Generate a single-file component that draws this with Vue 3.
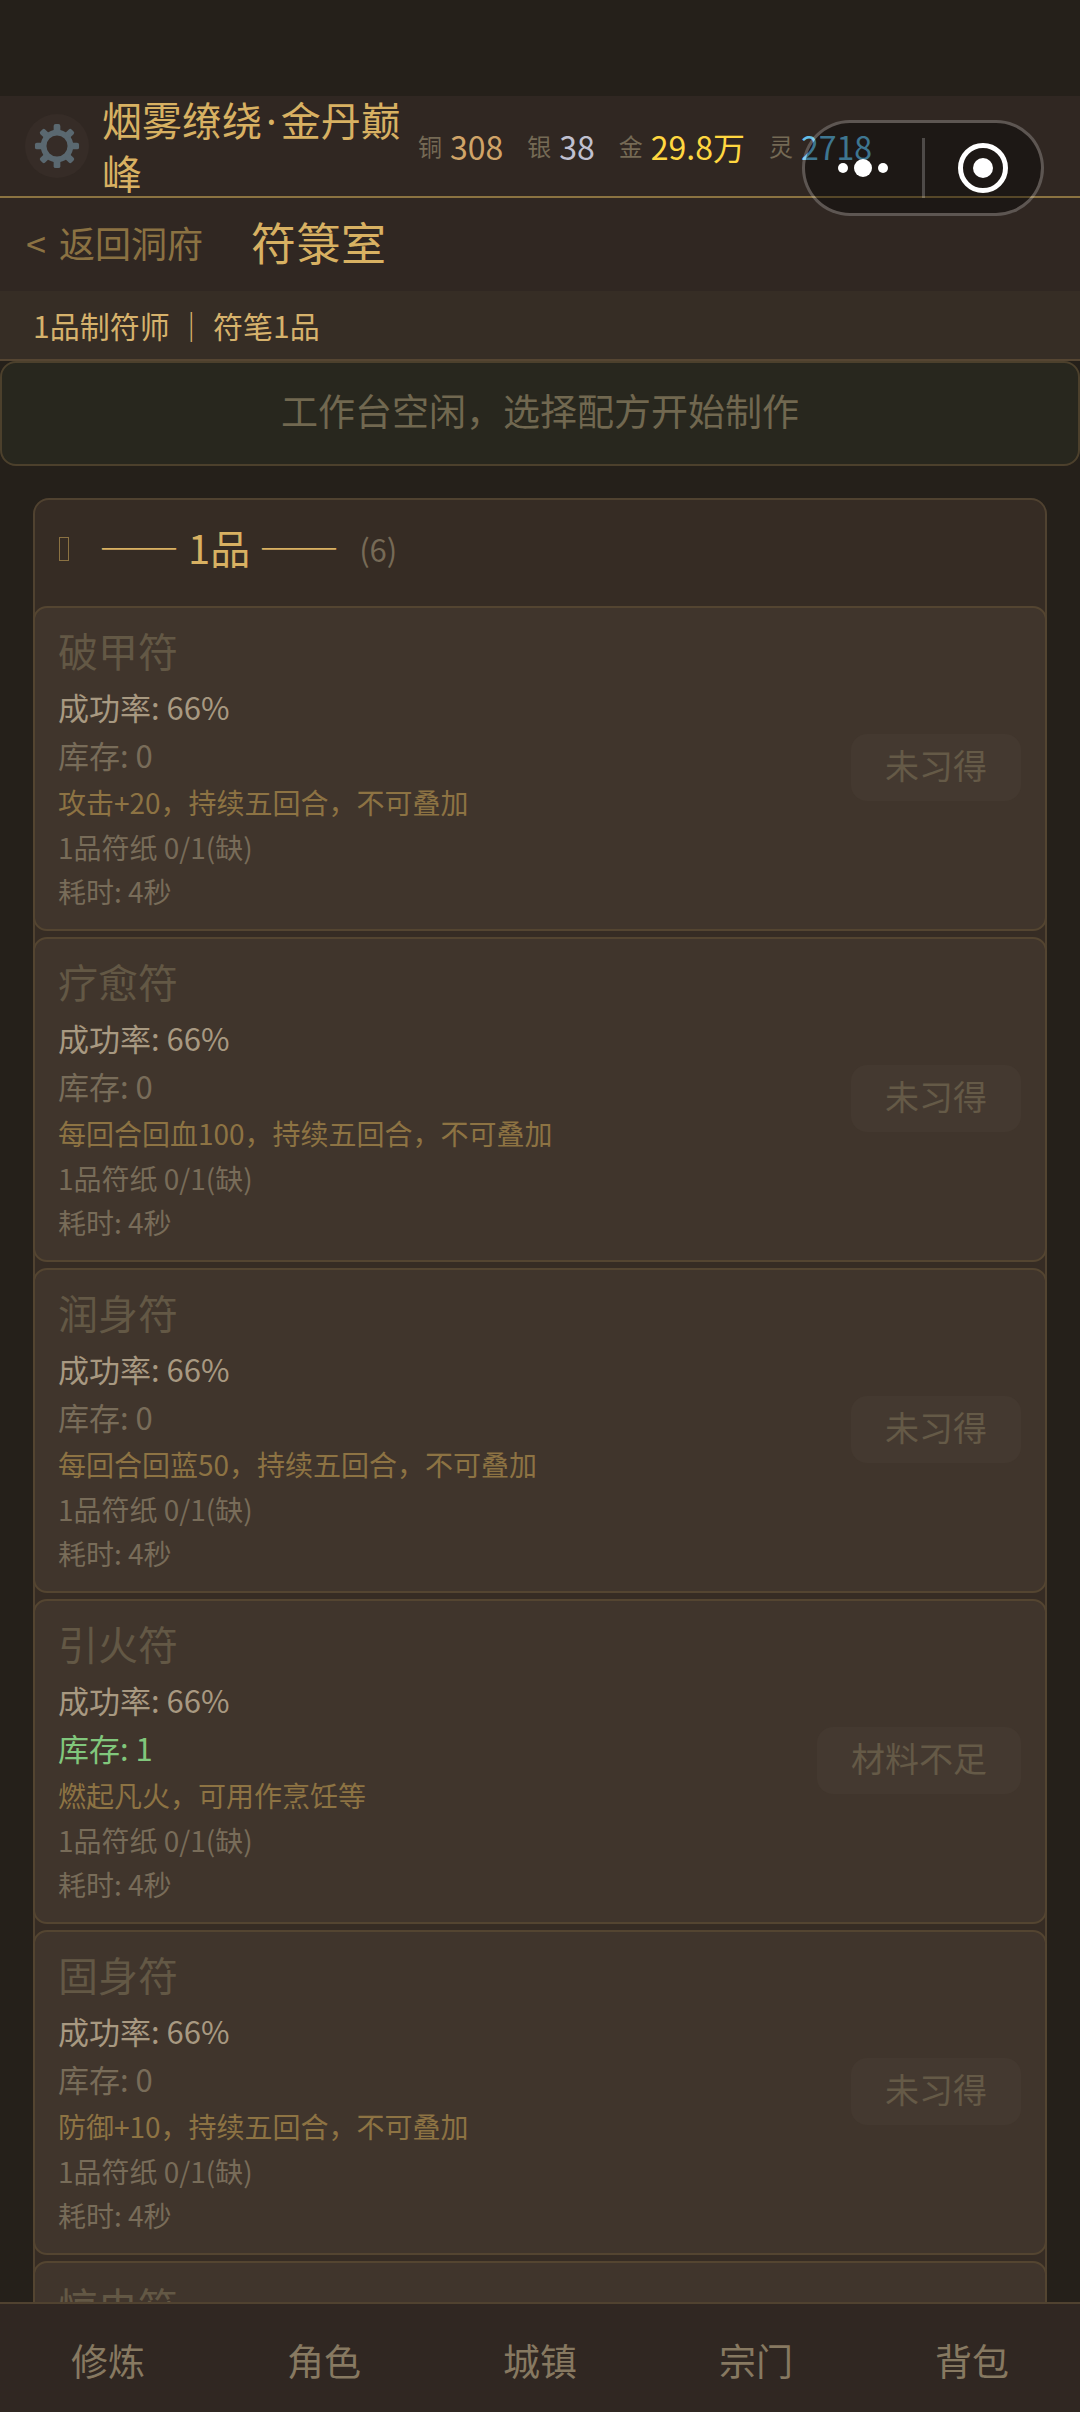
<script setup>
const wallet = [
  { label: '铜', value: '308', tone: 'copper' },
  { label: '银', value: '38', tone: 'silver' },
  { label: '金', value: '29.8万', tone: 'gold' },
  { label: '灵', value: '2718', tone: 'spirit' },
]

const recipe = (name, effect, stock = 0, action = '未习得') => ({ name, effect, stock, action })

const recipes = [
  recipe('破甲符', '攻击+20，持续五回合，不可叠加'),
  recipe('疗愈符', '每回合回血100，持续五回合，不可叠加'),
  recipe('润身符', '每回合回蓝50，持续五回合，不可叠加'),
  recipe('引火符', '燃起凡火，可用作烹饪等', 1, '材料不足'),
  recipe('固身符', '防御+10，持续五回合，不可叠加'),
  recipe('惊虫符', ''),
]

const tabs = ['修炼', '角色', '城镇', '宗门', '背包']
const teeth = [0, 45, 90, 135, 180, 225, 270, 315]
</script>

<template>
  <div class="app" lang="zh-CN">
    <header class="topbar">
      <button class="gear" aria-label="设置">
        <svg viewBox="0 0 48 48" aria-hidden="true">
          <circle cx="24" cy="24" r="14" fill="none" stroke="currentColor" stroke-width="6" />
          <rect
            v-for="angle in teeth"
            :key="angle"
            x="20.5"
            y="1"
            width="7"
            height="9"
            rx="2"
            fill="currentColor"
            :transform="`rotate(${angle} 24 24)`"
          />
        </svg>
      </button>
      <div class="player">烟雾缭绕<span class="dot">·</span>金丹巅峰</div>
      <ul class="wallet">
        <li v-for="coin in wallet" :key="coin.label">
          <span class="coin-label">{{ coin.label }}</span>
          <span :class="coin.tone">{{ coin.value }}</span>
        </li>
      </ul>
      <div class="capsule">
        <button aria-label="更多">
          <svg class="dots" viewBox="0 0 52 20" aria-hidden="true">
            <circle cx="6" cy="10" r="5" />
            <circle cx="26" cy="10" r="9" />
            <circle cx="46" cy="10" r="5" />
          </svg>
        </button>
        <span class="capsule-line"></span>
        <button aria-label="关闭">
          <svg class="ring" viewBox="0 0 50 50" aria-hidden="true">
            <circle cx="25" cy="25" r="22.5" fill="none" stroke="#fff" stroke-width="5" />
            <circle cx="25" cy="25" r="10" />
          </svg>
        </button>
      </div>
    </header>

    <div class="titlebar">
      <a class="back" href="#"><span>&lt;</span><span>返回洞府</span></a>
      <h1>符箓室</h1>
    </div>

    <div class="rank">1品制符师 ｜ 符笔1品</div>

    <main>
      <div class="bench">工作台空闲，选择配方开始制作</div>

      <section class="tier">
        <div class="tier-head">
          <span class="tier-mark"></span>
          <h2>—— 1品 ——</h2>
          <span class="tier-count">(6)</span>
        </div>
        <article v-for="item in recipes" :key="item.name" class="card">
          <div class="card-body">
            <h3>{{ item.name }}</h3>
            <p class="rate">成功率: 66%</p>
            <p class="stock" :class="{ owned: item.stock > 0 }">库存: {{ item.stock }}</p>
            <p v-if="item.effect" class="effect">{{ item.effect }}</p>
            <p class="detail">1品符纸 0/1(缺)</p>
            <p class="detail">耗时: 4秒</p>
          </div>
          <button class="craft" disabled>{{ item.action }}</button>
        </article>
      </section>
    </main>

    <nav class="tabs">
      <a v-for="tab in tabs" :key="tab" href="#">{{ tab }}</a>
    </nav>
  </div>
</template>

<style>
body {
  margin: 0;
  background: #25201a;
}
</style>

<style scoped>
.app {
  display: flex;
  flex-direction: column;
  height: 100vh;
  padding-top: 96px;
  box-sizing: border-box;
  overflow: hidden;
  background: #25201a;
  font-family: "Noto Sans CJK SC", sans-serif;
  font-size: 31px;
}

h1,
h2,
h3,
p,
ul {
  margin: 0;
  padding: 0;
  font-weight: 400;
  list-style: none;
}

button {
  border: 0;
  padding: 0;
  background: none;
  font-family: inherit;
}

a {
  text-decoration: none;
}

.topbar {
  position: relative;
  flex: none;
  display: flex;
  align-items: center;
  padding-left: 25px;
  background: #302722;
  border-bottom: 2px solid #8b7341;
}

.gear {
  flex: none;
  display: flex;
  align-items: center;
  justify-content: center;
  width: 64px;
  height: 64px;
  border-radius: 50%;
  background: #362c27;
  color: #5a6870;
}

.gear svg {
  width: 46px;
  height: 46px;
}

.player {
  width: 304px;
  margin: -3px 12px -3px 13px;
  color: #d8b162;
  font-size: 40px;
  line-height: 53px;
}

.dot {
  margin: 0 4px;
  font-family: "Noto Sans", sans-serif;
  line-height: 1;
}

.wallet {
  display: flex;
  gap: 24px;
  white-space: nowrap;
}

.wallet li {
  display: flex;
  align-items: center;
  gap: 8px;
  font-size: 32px;
  line-height: 48px;
}

.wallet .coin-label {
  color: #756a55;
  font-size: 24px;
}

.copper {
  color: #d0a468;
}

.silver {
  color: #c0c0d0;
}

.gold {
  color: #ffd740;
}

.spirit {
  color: #64bfe8;
}

.capsule {
  position: absolute;
  top: 24px;
  right: 36px;
  display: flex;
  align-items: center;
  width: 242px;
  height: 96px;
  box-sizing: border-box;
  border: 3px solid rgba(255, 255, 255, 0.22);
  border-radius: 48px;
  background: rgba(0, 0, 0, 0.38);
  background-clip: padding-box;
}

.capsule button {
  flex: 1;
  display: flex;
  align-items: center;
  justify-content: center;
}

.capsule svg {
  fill: #fff;
}

.capsule-line {
  width: 3px;
  height: 60px;
  background: rgba(255, 255, 255, 0.22);
}

.dots {
  width: 52px;
  height: 20px;
}

.ring {
  width: 50px;
  height: 50px;
}

.titlebar {
  flex: none;
  display: flex;
  align-items: center;
  gap: 48px;
  padding: 12px 26px 17px;
  background: #302722;
}

.back {
  display: flex;
  gap: 13px;
  color: #8b7242;
  font-size: 36px;
  line-height: 64px;
}

.titlebar h1 {
  color: #d8b162;
  font-size: 45px;
  line-height: 64px;
}

.rank {
  flex: none;
  padding: 10px 33px;
  background: #362d25;
  border-bottom: 2px solid #554532;
  color: #d6b26c;
  font-size: 30px;
  line-height: 48px;
}

main {
  flex: 1;
  min-height: 0;
  overflow: hidden;
}

.bench {
  padding: 19px 0 26px;
  border: 2px solid #4c402c;
  border-radius: 16px;
  background: #28271e;
  color: #716850;
  font-size: 37px;
  line-height: 56px;
  text-align: center;
}

.tier {
  margin: 32px 33px;
  border: 2px solid #504230;
  border-radius: 16px;
  background: #362c24;
}

.tier-head {
  display: flex;
  align-items: center;
  padding: 21px 24px 29px;
  line-height: 56px;
}

.tier-mark {
  width: 8px;
  height: 22px;
  margin-right: 30px;
  border: 1px solid #8b7242;
}

.tier-head h2 {
  padding-bottom: 4px;
  color: #d8b162;
  font-size: 40px;
  line-height: 52px;
}

.tier-count {
  margin-left: 20px;
  color: #766a56;
}

.card {
  display: flex;
  align-items: center;
  margin: 0 -2px 6px;
  padding: 14px 24px 16px 23px;
  border: 2px solid #544531;
  border-radius: 14px;
  background: #40352c;
}

.card-body {
  flex: 1;
}

.card h3 {
  margin-bottom: 5px;
  color: #635845;
  font-size: 40px;
  line-height: 56px;
}

.rate,
.stock {
  color: #a89981;
  line-height: 48px;
}

.stock {
  color: #786c59;
}

.owned {
  color: #81c77c;
}

.effect {
  color: #8d7343;
  font-size: 28px;
  line-height: 46px;
}

.detail {
  color: #786c59;
  font-size: 28px;
  line-height: 44px;
}

.craft {
  padding: 7px 34px 12px;
  border-radius: 16px;
  background: #443930;
  color: #655a47;
  font-size: 34px;
  line-height: 48px;
}

.tabs {
  flex: none;
  display: flex;
  padding: 28px 0 24px;
  border-top: 2px solid #504230;
  background: #302722;
}

.tabs a {
  flex: 1;
  color: #877961;
  font-size: 37px;
  line-height: 56px;
  text-align: center;
}
</style>
